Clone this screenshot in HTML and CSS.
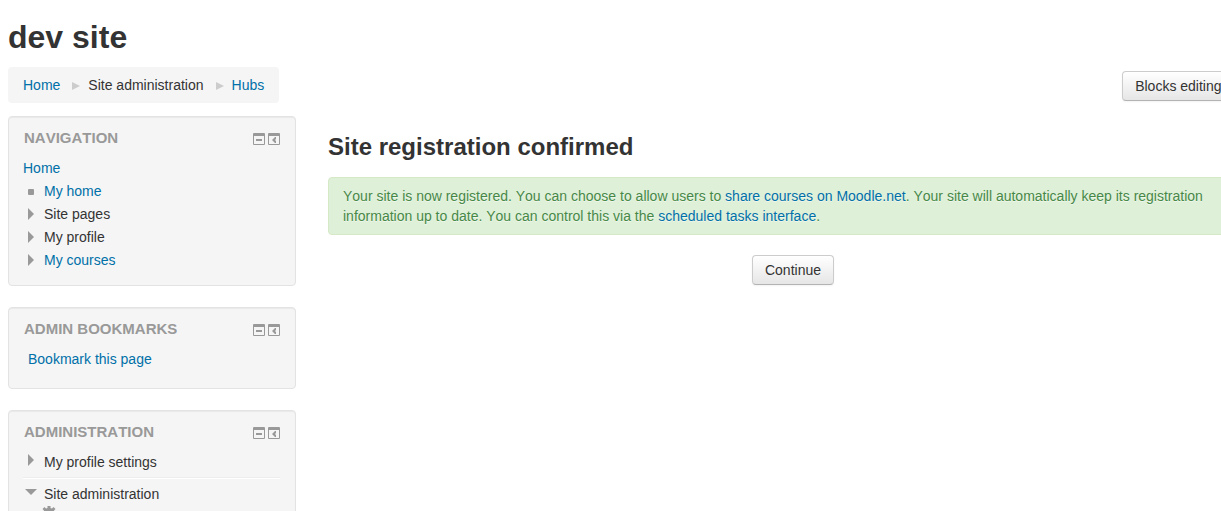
FILE: index.html
```
<!DOCTYPE html>
<html lang="en">
<head>
<meta charset="utf-8">
<title>dev site: Site registration confirmed</title>
<link rel="stylesheet" href="styles.css">
</head>
<body>
<svg class="sprite" aria-hidden="true">
  <symbol id="minus" viewBox="0 0 12 12"><path d="M0 1a1 1 0 0 1 1-1h10a1 1 0 0 1 1 1v10a1 1 0 0 1-1 1H1a1 1 0 0 1-1-1zM1 3v8h10V3zM3 6h6v2H3z" fill-rule="evenodd"/></symbol>
  <symbol id="dock" viewBox="0 0 12 12"><path d="M0 1a1 1 0 0 1 1-1h10a1 1 0 0 1 1 1v10a1 1 0 0 1-1 1H1a1 1 0 0 1-1-1zM1 3v8h10V3zM4 7l3-3h1v2L7 7l1 1v2H7z" fill-rule="evenodd"/></symbol>
  <symbol id="right" viewBox="0 0 12 12"><path d="M3 0l6 6-6 6z"/></symbol>
  <symbol id="down" viewBox="0 0 12 12"><path d="M0 3h12L6 9z"/></symbol>
  <symbol id="square" viewBox="0 0 12 12"><rect x="3" y="4" width="6" height="6" rx="1"/></symbol>
  <symbol id="gear" viewBox="0 0 14 14"><path d="M5.500 0h3v2l1.500.5 1.500-1.500 2 2L12 4.500l.5 1h1.500v3h-1.500l-.5 1 1.500 1.500-2 2-1.500-1.500-1.500.5v2h-3v-2L4 11.500 2.500 13l-2-2L2 9.500l-.5-1H0v-3h1.500l.5-1L.5 3l2-2L4 2.500 5.500 2zM7 5a2 2 0 1 0 0 4 2 2 0 0 0 0-4z" fill-rule="evenodd"/></symbol>
</svg>
<div class="page">
  <header>
    <h1>dev site</h1>
    <div class="navbar">
      <nav aria-label="Breadcrumb">
        <ul class="breadcrumb">
          <li><a href="#">Home</a></li>
          <li><svg class="separator" viewBox="0 0 8 8" aria-hidden="true"><path d="M0 0l8 4-8 4z"/></svg>Site administration</li>
          <li><svg class="separator" viewBox="0 0 8 8" aria-hidden="true"><path d="M0 0l8 4-8 4z"/></svg><a href="#">Hubs</a></li>
        </ul>
      </nav>
      <button class="btn" type="button">Blocks editing on</button>
    </div>
  </header>
  <div class="columns">
    <aside class="sidebar">
      <section class="block">
        <div class="block-header">
          <h2>Navigation</h2>
          <button type="button" aria-label="Hide Navigation block"><svg><use href="#minus"/></svg></button>
          <button type="button" aria-label="Dock Navigation block"><svg><use href="#dock"/></svg></button>
        </div>
        <a href="#">Home</a>
        <ul class="tree">
          <li><svg><use href="#square"/></svg><a href="#">My home</a></li>
          <li><svg><use href="#right"/></svg>Site pages</li>
          <li><svg><use href="#right"/></svg>My profile</li>
          <li><svg><use href="#right"/></svg><a href="#">My courses</a></li>
        </ul>
      </section>
      <section class="block">
        <div class="block-header">
          <h2>Admin bookmarks</h2>
          <button type="button" aria-label="Hide Admin bookmarks block"><svg><use href="#minus"/></svg></button>
          <button type="button" aria-label="Dock Admin bookmarks block"><svg><use href="#dock"/></svg></button>
        </div>
        <div class="block-footer"><a href="#">Bookmark this page</a></div>
      </section>
      <section class="block">
        <div class="block-header">
          <h2>Administration</h2>
          <button type="button" aria-label="Hide Administration block"><svg><use href="#minus"/></svg></button>
          <button type="button" aria-label="Dock Administration block"><svg><use href="#dock"/></svg></button>
        </div>
        <ul class="settings">
          <li><svg><use href="#right"/></svg>My profile settings</li>
        </ul>
        <hr>
        <ul class="settings">
          <li><svg><use href="#down"/></svg>Site administration</li>
          <li class="child"><svg><use href="#gear"/></svg></li>
        </ul>
      </section>
    </aside>
    <main>
      <h2>Site registration confirmed</h2>
      <div class="alert" role="status">Your site is now registered. You can choose to allow users to <a href="#">share courses on Moodle.net</a>. Your site will automatically keep its registration information up to date. You can control this via the <a href="#">scheduled tasks interface</a>.</div>
      <div class="actions"><button class="btn" type="button">Continue</button></div>
    </main>
  </div>
</div>
</body>
</html>
```
FILE: styles.css
```
* { box-sizing: border-box; }
body {
  margin: 0;
  height: 100vh;
  overflow: hidden;
  background: #fff;
  color: #333;
  font: 14px/20px "Liberation Sans", Arial, sans-serif;
  font-kerning: none;
}
h1, h2, ul { margin: 0; padding: 0; }
ul { list-style: none; }
a { color: #0070a8; text-decoration: none; }
.sprite { position: absolute; width: 0; height: 0; }

/* The page runs past the right edge of the window. */
.page { margin: 0 -37px 0 8px; padding-top: 17px; }
h1 { font-size: 32px; line-height: 40px; }

.navbar {
  display: flex;
  justify-content: space-between;
  align-items: flex-end;
  margin-top: 10px;
  padding-right: 4px;
}
.navbar .btn { margin-bottom: 2px; }
.breadcrumb {
  display: flex;
  padding: 8px 15px;
  background: #f5f5f5;
  border-radius: 4px;
}
.separator {
  width: 8px;
  height: 8px;
  margin: 0 8px 0 12px;
  fill: #ccc;
}

.btn {
  padding: 4px 12px;
  border: 1px solid #ccc;
  border-bottom-color: #b3b3b3;
  border-radius: 4px;
  background: linear-gradient(#fff, #e6e6e6);
  box-shadow: 0 1px 2px rgba(0, 0, 0, .05);
  color: #333;
  font: inherit;
  font-kerning: none;
}

.columns {
  display: grid;
  grid-template-columns: 288fr 930fr;
  gap: 32px;
  margin-top: 13px;
}
.block {
  margin-bottom: 21px;
  padding: 11px 15px 15px 14px;
  border: 1px solid #e3e3e3;
  border-radius: 4px;
  background: #f5f5f5;
  box-shadow: inset 0 1px 1px rgba(0, 0, 0, .05);
}
.block-header {
  display: flex;
  align-items: center;
  gap: 3px;
  margin-bottom: 10px;
}
.block-header h2 {
  flex: 1;
  padding-left: 1px;
  color: #999;
  font-size: 15px;
  line-height: 20px;
  text-transform: uppercase;
}
.block-header button {
  padding: 2px 0 0;
  border: 0;
  background: none;
  line-height: 0;
}
.block svg { width: 12px; height: 12px; fill: #999; }
.tree li, .settings li {
  display: flex;
  align-items: center;
  gap: 7px;
  padding-left: 2px;
}
.tree li { margin-top: 3px; }
.settings svg { margin-bottom: 4px; }
.settings .child { padding: 2px 0 0 19px; }
.settings .child svg { width: 14px; height: 14px; margin: 0; }
.block-footer { padding: 0 5px 4px; }
hr {
  margin: 5px 0;
  border: 0;
  border-top: 1px solid #eee;
  border-bottom: 1px solid #fff;
}

main { padding-top: 11px; }
main h2 { font-size: 24px; line-height: 40px; }
.alert {
  margin: 10px 0 20px;
  padding: 8px 35px 8px 14px;
  border: 1px solid #d6e9c6;
  border-radius: 4px;
  background: #dff0d8;
  color: #468847;
  text-shadow: 0 1px 0 rgba(255, 255, 255, .5);
}
.actions { text-align: center; }
```
